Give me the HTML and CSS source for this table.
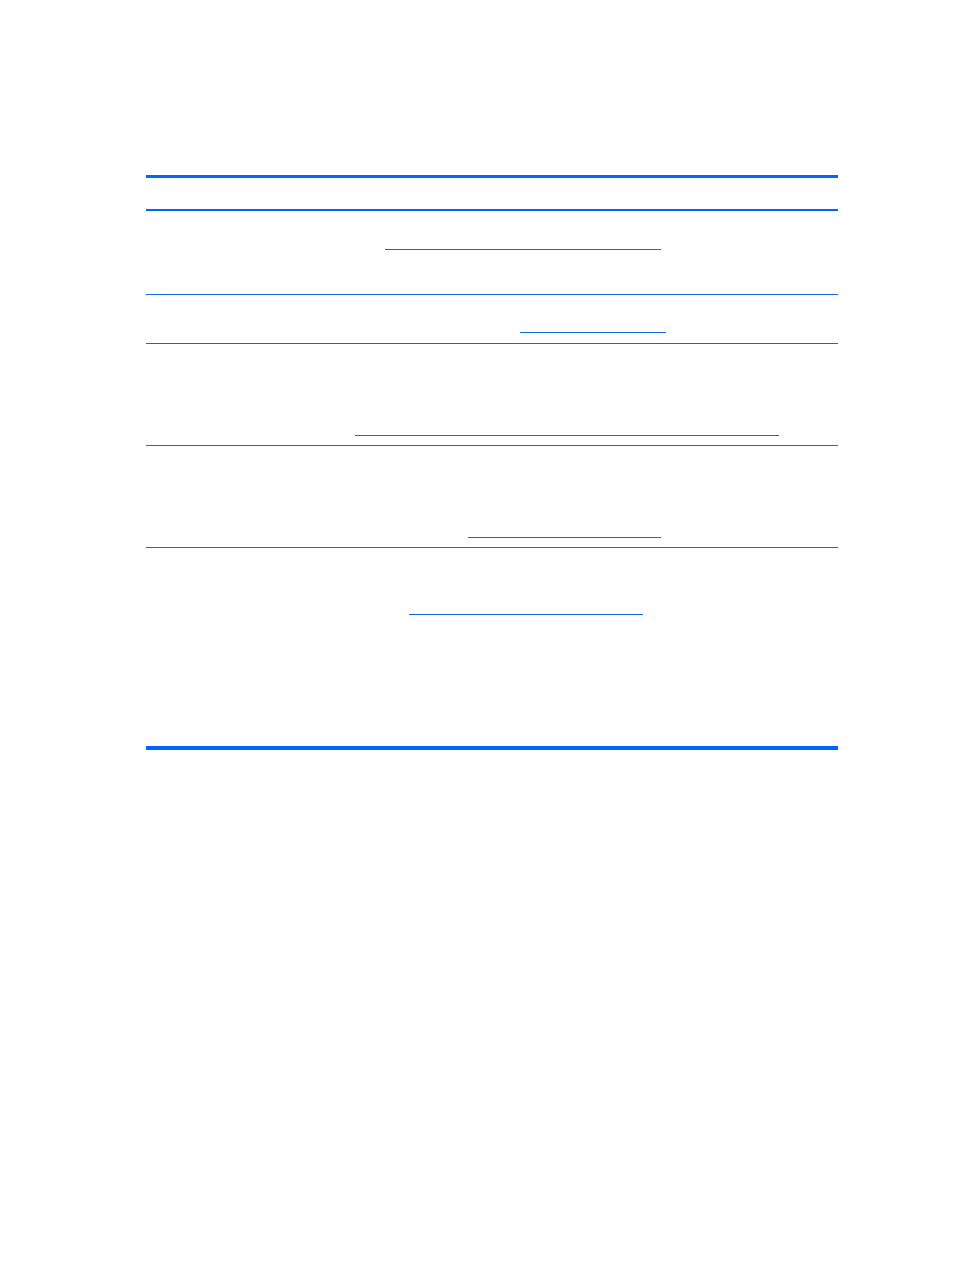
FILE: index.html
```html
<!DOCTYPE html>
<html>
<head>
<meta charset="utf-8">
<link rel="stylesheet" href="styles.css">
</head>
<body>
<div class="table">
  <div class="head"></div>
  <div class="row row1"><div class="link l1"></div></div>
  <div class="row row2"><div class="link l2"></div></div>
  <div class="row row3"><div class="link l3"></div></div>
  <div class="row row4"><div class="link l4"></div></div>
  <div class="row row5"><div class="link l5"></div></div>
</div>
</body>
</html>
```
FILE: styles.css
```css
html, body { margin: 0; padding: 0; background: #ffffff; }
body { font-family: "Liberation Sans", Arial, sans-serif; }
.table {
  margin: 175px 0 0 146px;
  width: 692px;
  border-top: 3px solid #0066ff;
  border-bottom: 4px solid #0066ff;
}
.head { height: 31px; border-bottom: 2px solid #0066ff; }
.row { box-sizing: border-box; border-bottom: 1px solid #1466e6; }
.row5 { border-bottom: none; }
.row1 { height: 84px; padding-top: 38px; }
.row2 { height: 49px; padding-top: 37px; }
.row3 { height: 102px; padding-top: 91px; }
.row4 { height: 102px; padding-top: 91px; }
.row5 { height: 198px; padding-top: 66px; }
.link { height: 1px; background: #1466e6; }
.l1 { margin-left: 239px; width: 276px; }
.l2 { margin-left: 374px; width: 146px; }
.l3 { margin-left: 209px; width: 424px; }
.l4 { margin-left: 322px; width: 193px; }
.l5 { margin-left: 263px; width: 234px; }
```
